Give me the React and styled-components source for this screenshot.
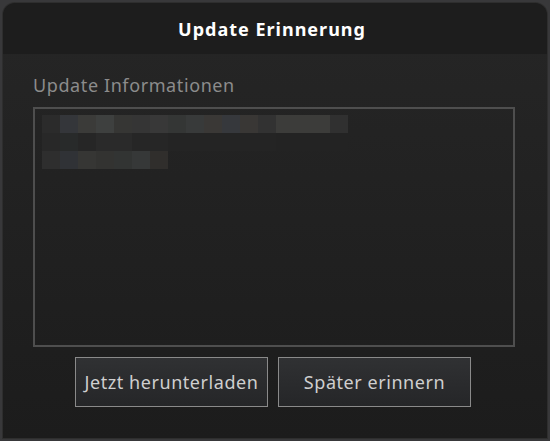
import React from "react";
import styled, { createGlobalStyle } from "styled-components";

const Global = createGlobalStyle`
  html, body { margin: 0; padding: 0; background: #38383a; }
  body { width: 550px; height: 441px; overflow: hidden; font-family: "Noto Sans", "Open Sans", sans-serif; }
  #root { padding: 3px; box-sizing: border-box; width: 550px; height: 441px; }
`;

const Window = styled.div`
  width: 544px;
  height: 435px;
  display: flex;
  flex-direction: column;
  border-radius: 12px 12px 0 0;
  overflow: hidden;
  background: linear-gradient(#262626, #1c1c1c);
  box-shadow: 0 0 0 1px #2e2e2e;
`;

const TitleBar = styled.div`
  height: 51px;
  flex: none;
  background: #1d1d1d;
  display: flex;
  align-items: center;
  justify-content: center;
  padding-right: 6px;
  color: #ffffff;
  font-weight: 700;
  font-size: 18px;
  letter-spacing: 1px;
`;

const Body = styled.div`
  flex: 1;
  display: flex;
  flex-direction: column;
  padding: 19px 32px 0 30px;
`;

const Label = styled.div`
  color: #8c8c8c;
  font-size: 18px;
  letter-spacing: 0.6px;
  line-height: 24px;
  height: 24px;
`;

const InfoBox = styled.div`
  margin-top: 10px;
  height: 240px;
  box-sizing: border-box;
  border: 2px solid #4e4e4e;
  padding: 6px 7px;
  display: flex;
  flex-direction: column;
`;

const MosaicRow = styled.div`
  display: flex;
  height: 18px;
`;

const Cell = styled.div`
  width: 18px;
  height: 18px;
  background: ${(p) => p.$c};
`;

const Buttons = styled.div`
  margin-top: 10px;
  display: flex;
  justify-content: center;
  gap: 10px;
  padding-right: 2px;
`;

const Button = styled.button`
  width: 193px;
  height: 50px;
  box-sizing: border-box;
  border: 1px solid #8a8a8a;
  background: linear-gradient(#303133, #252628);
  color: #cfcfcf;
  font-family: "Noto Sans", "Open Sans", sans-serif;
  font-size: 18px;
  letter-spacing: 0.55px;
  padding: 0;
  cursor: pointer;
`;

const rows = [
  ["#2b2b2b", "#34363a", "#3b3b39", "#3e403f", "#363634", "#353535", "#383838", "#343635", "#383a3a", "#3a3836", "#36383c", "#393735", "#323232", "#3c3c3a", "#3c3c3a", "#3c3c3a", "#303030"],
  ["#282828", "#282a2a", "#262626", "#2a2a2a", "#2a2a2a", "#262626", "#262626", "#242424", "#242424", "#242424", "#242424", "#242424", "#242424", "#232323", "#232323", "#232323", "#232323"],
  ["#2e2e2e", "#303236", "#363634", "#333331", "#323433", "#363838", "#302e2c"],
];

export default function App() {
  return (
    <>
      <Global />
      <Window>
        <TitleBar>Update Erinnerung</TitleBar>
        <Body>
          <Label>Update Informationen</Label>
          <InfoBox>
            {rows.map((r, i) => (
              <MosaicRow key={i}>
                {r.map((c, j) => (
                  <Cell key={j} $c={c} />
                ))}
              </MosaicRow>
            ))}
          </InfoBox>
          <Buttons>
            <Button>Jetzt herunterladen</Button>
            <Button>Später erinnern</Button>
          </Buttons>
        </Body>
      </Window>
    </>
  );
}
